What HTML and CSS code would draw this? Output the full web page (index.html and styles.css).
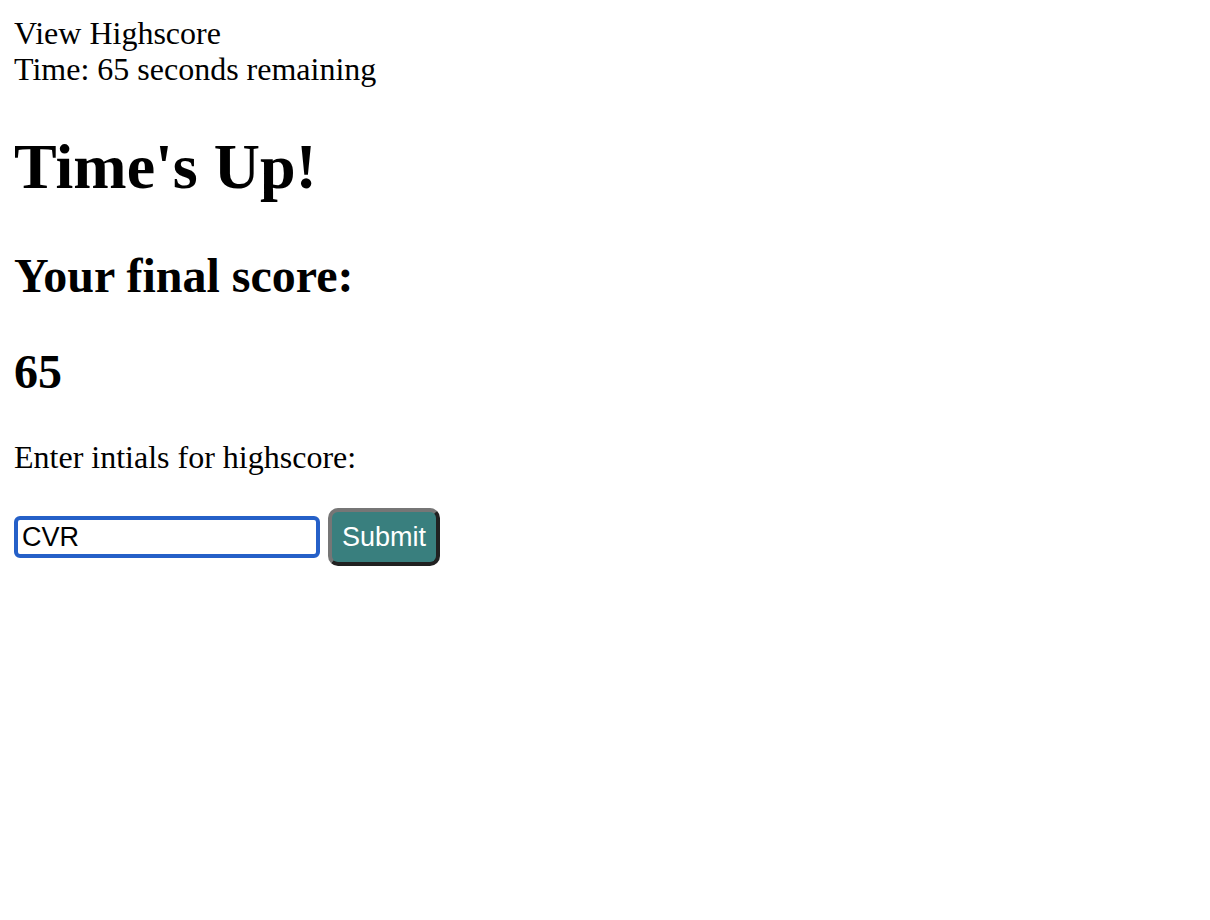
FILE: index.html
```html
<!DOCTYPE html>
<html lang="en">
<head>
<meta charset="utf-8">
<title>Code Quiz</title>
<link rel="stylesheet" href="styles.css">
</head>
<body>
<header class="top">
<div class="line">View Highscore</div>
<div class="line">Time: 65 seconds remaining</div>
</header>
<main>
<h1 class="title">Time's Up!</h1>
<h2 class="subtitle">Your final score:</h2>
<h2 class="subtitle">65</h2>
<form class="entry">
<label class="prompt" for="initials">Enter intials for highscore:</label>
<div class="controls">
<input class="initials" id="initials" type="text" value="CVR">
<button class="submit" type="button">Submit</button>
</div>
</form>
</main>
</body>
</html>
```
FILE: styles.css
```css
body {
  margin: 15px 14px;
  background: #fff;
  color: #000;
  font-family: "Liberation Serif", "Times New Roman", serif;
  font-size: 32px;
  line-height: 36px;
}

.title {
  margin: 43px 0 44px;
  font-size: 64px;
  line-height: 74px;
}

.subtitle {
  margin: 40px 0 39px;
  font-size: 48px;
  line-height: 56px;
  font-variant-ligatures: common-ligatures;
  text-rendering: optimizeLegibility;
}

.prompt {
  display: block;
}

.controls {
  display: flex;
  align-items: center;
  gap: 8px;
  margin-top: 33px;
}

.initials {
  box-sizing: border-box;
  width: 306px;
  height: 42px;
  padding: 0 4px;
  border: 4px solid #2560c8;
  border-radius: 6px;
  outline: none;
  background: #fff;
  color: #000;
  font: 27px/32px "Liberation Sans", Arial, sans-serif;
}

.submit {
  padding: 9px 10px;
  border: 4px outset #767676;
  border-radius: 10px;
  background: #397f7e;
  color: #fff;
  font: 27px/32px "Liberation Sans", Arial, sans-serif;
}
```
